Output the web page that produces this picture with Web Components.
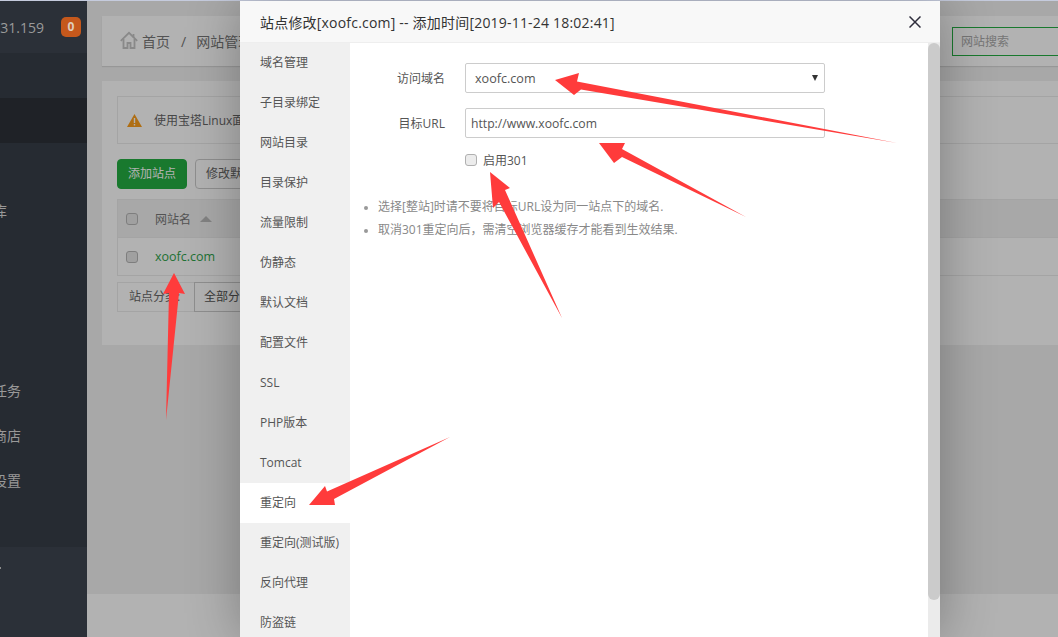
<!DOCTYPE html>
<html lang="zh">
<head>
<meta charset="utf-8">
<title>站点修改</title>
<style>
    html, body { margin: 0; height: 100%; overflow: hidden; }
    body { font: 12px "Open Sans", "Noto Sans CJK SC", sans-serif; color: #555; background: #c5cbdd; }
    bt-app { height: 637px; }
</style>
</head>
<body>
<bt-app>
    <bt-sidebar slot="side" ip="47.106.231.159" count="0">
        <bt-nav-item active></bt-nav-item>
        <bt-nav-item></bt-nav-item>
        <bt-nav-item>数据库</bt-nav-item>
        <bt-nav-item></bt-nav-item>
        <bt-nav-item></bt-nav-item>
        <bt-nav-item></bt-nav-item>
        <bt-nav-item>计划任务</bt-nav-item>
        <bt-nav-item>软件商店</bt-nav-item>
        <bt-nav-item>面板设置</bt-nav-item>
    </bt-sidebar>
    <bt-main>
        <bt-breadcrumb></bt-breadcrumb>
        <bt-site-card></bt-site-card>
    </bt-main>
    <bt-site-modal slot="over" heading="站点修改[xoofc.com] -- 添加时间[2019-11-24 18:02:41]">
        <bt-redirect-form></bt-redirect-form>
    </bt-site-modal>
    <bt-arrows slot="over"></bt-arrows>
</bt-app>

<script>
class BtApp extends HTMLElement {
    constructor() {
        super();
        this.attachShadow({ mode: "open" }).innerHTML = `
        <style>
            :host { display: block; position: relative; overflow: hidden; }
            .page { display: flex; height: 636px; margin-top: 1px; background: #f1f1f1; }
            .main { flex: 1; min-width: 0; }
        </style>
        <div class="page">
            <slot name="side"></slot>
            <div class="main"><slot></slot></div>
        </div>
        <slot name="over"></slot>`;
    }
}
customElements.define("bt-app", BtApp);

// sits above the backdrop, so its colours are the dimmed ones already
class BtSidebar extends HTMLElement {
    constructor() {
        super();
        this.attachShadow({ mode: "open" }).innerHTML = `
        <style>
            :host { display: flex; flex-direction: column; position: relative; z-index: 1; width: 87px; flex: none; background: #262b32; overflow: hidden; }
            .top { height: 52px; background: #2b3038; display: flex; align-items: center; justify-content: flex-end; gap: 17px; padding-right: 6px; white-space: nowrap; flex: none; }
            .ip { font-size: 14px; color: #9a9a9a; }
            .badge { width: 20px; height: 20px; border-radius: 5px; background: #c5581c; color: #dfcdbd; font-weight: 700; font-size: 12px; line-height: 20px; text-align: center; flex: none; }
            nav { padding-top: 45px; }
            .foot { margin-top: auto; height: 90px; background: #2b3038; flex: none; padding-top: 20px; box-sizing: border-box; }
            .foot i { display: block; width: 1px; height: 2px; background: #8c8c8c; }
        </style>
        <div class="top"><span class="ip"></span><span class="badge"></span></div>
        <nav><slot></slot></nav>
        <div class="foot"><i></i></div>`;
    }
    connectedCallback() {
        this.shadowRoot.querySelector(".ip").textContent = this.getAttribute("ip");
        this.shadowRoot.querySelector(".badge").textContent = this.getAttribute("count");
    }
}
customElements.define("bt-sidebar", BtSidebar);

class BtNavItem extends HTMLElement {
    constructor() {
        super();
        this.attachShadow({ mode: "open" }).innerHTML = `
        <style>
            :host { display: block; height: 45px; line-height: 45px; font-size: 14px; color: #999; white-space: nowrap; margin-left: -35px; }
            :host([active]) { background: #1f2227; }
        </style>
        <slot></slot>`;
    }
}
customElements.define("bt-nav-item", BtNavItem);

class BtMain extends HTMLElement {
    constructor() {
        super();
        this.attachShadow({ mode: "open" }).innerHTML = `
        <style>
            :host { display: flex; flex-direction: column; height: 636px; overflow: hidden; }
            .body { padding: 15px 0 0 15px; width: 1100px; }
            .foot { margin-top: auto; height: 43px; background: #fff; flex: none; }
        </style>
        <div class="body"><slot></slot></div>
        <div class="foot"></div>`;
    }
}
customElements.define("bt-main", BtMain);

class BtBreadcrumb extends HTMLElement {
    constructor() {
        super();
        this.attachShadow({ mode: "open" }).innerHTML = `
        <style>
            :host { display: flex; align-items: center; height: 50px; background: #fff; box-shadow: 0 1px 1px rgba(0,0,0,.1); margin-bottom: 15px; padding: 0 130px 0 18px; font-size: 14px; color: #777; white-space: nowrap; }
            svg { width: 18px; height: 18px; margin: -3px 4px 0 0; flex: none; }
            .sep { margin: 0 10px 0 11px; }
            .search { margin-left: auto; width: 120px; height: 29px; box-sizing: border-box; border: 1px solid #25ae42; padding-left: 8px; font-size: 12px; line-height: 27px; color: #aaa; flex: none; }
        </style>
        <svg viewBox="0 0 18 18" fill="none" stroke="#c4c4c4" stroke-width="1.800">
            <path d="M.8 9.800 9 1.800l8.200 8"/>
            <path d="M3.500 8v9h4v-5h3v5h4V8"/>
            <path d="M13.500 3v3.500"/>
        </svg>
        <span>首页</span><span class="sep">/</span><span>网站管理</span>
        <span class="search">网站搜索</span>`;
    }
}
customElements.define("bt-breadcrumb", BtBreadcrumb);

class BtSiteCard extends HTMLElement {
    constructor() {
        super();
        this.attachShadow({ mode: "open" }).innerHTML = `
        <style>
            :host { display: block; background: #fff; height: 264px; padding: 15px; box-sizing: border-box; white-space: nowrap; }
            .alert { display: flex; align-items: center; height: 48px; box-sizing: border-box; border: 1px solid #ebebeb; padding-left: 9px; color: #666; }
            .alert svg { width: 15px; height: 13px; margin-right: 12px; }
            .tools { display: flex; gap: 8px; margin: 15px 0 10px; }
            .btn { height: 30px; line-height: 28px; box-sizing: border-box; border: 1px solid #ccc; border-radius: 4px; padding: 0 10px; color: #666; background: #fff; }
            .btn.green { background: #25ae42; border-color: #25ae42; color: #fff; }
            .row { display: flex; align-items: center; height: 38px; box-sizing: border-box; border: 1px solid #ebebeb; border-top: 0; padding-left: 8px; }
            .row.head { height: 39px; border-top: 1px solid #ebebeb; background: #f1f1f1; color: #777; }
            .box { width: 12px; height: 12px; border: 1px solid #b5b5b5; border-radius: 3px; background: #e6e6e6; box-sizing: border-box; margin-right: 17px; }
            .caret { width: 0; height: 0; border: 6px solid transparent; border-top: 0; border-bottom: 6px solid #bbb; margin-left: 9px; }
            .link { font-size: 12.500px; color: #30a34c; }
            .group { display: flex; margin-top: 6px; height: 30px; }
            .group span { box-sizing: border-box; border: 1px solid #ebebeb; line-height: 28px; }
            .group .label { width: 77px; padding-left: 11px; border-right: 0; color: #666; }
            .group .select { width: 120px; padding-left: 9px; border-color: #ccc; color: #555; }
        </style>
        <div class="alert">
            <svg viewBox="0 0 15 13"><path d="M7.500 0 15 13H0z" fill="#fb9e1c"/><path d="M6.800 4h1.400v5H6.800zM6.800 10h1.400v1.500H6.800z" fill="#fff"/></svg>
            使用宝塔Linux面板
        </div>
        <div class="tools"><span class="btn green">添加站点</span><span class="btn">修改默认页</span></div>
        <div class="row head"><span class="box"></span>网站名<span class="caret"></span></div>
        <div class="row"><span class="box"></span><span class="link">xoofc.com</span></div>
        <div class="group"><span class="label">站点分类:</span><span class="select">全部分类</span></div>`;
    }
}
customElements.define("bt-site-card", BtSiteCard);

class BtSiteModal extends HTMLElement {
    constructor() {
        super();
        const tabs = ["域名管理", "子目录绑定", "网站目录", "目录保护", "流量限制", "伪静态", "默认文档", "配置文件", "SSL", "PHP版本", "Tomcat", "重定向", "重定向(测试版)", "反向代理", "防盗链"];
        this.attachShadow({ mode: "open" }).innerHTML = `
        <style>
            :host { display: block; position: absolute; left: 0; right: 0; top: 1px; bottom: 0; background: rgba(0,0,0,.3); }
            .layer { display: flex; flex-direction: column; width: 700px; height: 100%; margin-left: 240px; background: #fff; box-shadow: 1px 1px 50px rgba(0,0,0,.3); }
            header { display: flex; align-items: center; justify-content: space-between; height: 42px; box-sizing: border-box; flex: none; background: #f8f8f8; border-bottom: 1px solid #eee; padding: 0 19px 0 20px; font-size: 14px; letter-spacing: .2px; color: #333; }
            header svg { width: 12px; height: 12px; }
            .body { display: flex; flex: 1; min-height: 0; }
            ul { list-style: none; margin: 0; padding: 0; width: 110px; flex: none; background: #f0f0f0; overflow: hidden; }
            li { height: 40px; line-height: 40px; padding-left: 20px; color: #555; }
            li.on { background: #fff; }
            .content { flex: 1; min-width: 0; }
            .bar { width: 12px; flex: none; background: #ebebeb; }
            .thumb { height: 557px; background: #cbcbcb; border-radius: 6px; }
        </style>
        <div class="layer">
            <header><span class="title"></span>
                <svg viewBox="0 0 12 12" stroke="#2e2d3c" stroke-width="1.500" fill="none"><path d="M.5.5l11 11M11.500.5l-11 11"/></svg>
            </header>
            <div class="body">
                <ul>${tabs.map(t => `<li class="${t === "重定向" ? "on" : ""}">${t}</li>`).join("")}</ul>
                <div class="content"><slot></slot></div>
                <div class="bar"><div class="thumb"></div></div>
            </div>
        </div>`;
    }
    connectedCallback() {
        this.shadowRoot.querySelector(".title").textContent = this.getAttribute("heading");
    }
}
customElements.define("bt-site-modal", BtSiteModal);

class BtRedirectForm extends HTMLElement {
    constructor() {
        super();
        this.attachShadow({ mode: "open" }).innerHTML = `
        <style>
            :host { display: block; padding-top: 20px; }
            .line { display: flex; align-items: center; height: 30px; margin-bottom: 15px; }
            label { width: 95px; text-align: right; margin-right: 20px; color: #555; flex: none; }
            .ctrl { display: flex; align-items: center; justify-content: space-between; width: 360px; height: 30px; box-sizing: border-box; border: 1px solid #ccc; border-radius: 2px; color: #555; }
            .sel { padding: 0 6px 0 9px; font-size: 12.600px; }
            .sel i { width: 0; height: 0; border: 3.500px solid transparent; border-bottom: 0; border-top: 6px solid #333; }
            .inp { padding-left: 5px; font-size: 12.200px; }
            .check { display: flex; align-items: center; margin: -3px 0 0 115px; height: 20px; color: #555; }
            .check i { width: 12px; height: 12px; box-sizing: border-box; border: 1px solid #b0b0b0; border-radius: 3px; background: #ececec; margin-right: 6px; }
            ul { margin: 25px 0 0; padding: 0 0 0 28px; color: #888; line-height: 23px; }
            li::marker { color: #999; font-size: 10px; }
        </style>
        <div class="line"><label>访问域名</label><div class="ctrl sel"><span>xoofc.com</span><i></i></div></div>
        <div class="line"><label>目标URL</label><div class="ctrl inp"><span>http://www.xoofc.com</span></div></div>
        <div class="check"><i></i>启用301</div>
        <ul>
            <li>选择[整站]时请不要将目标URL设为同一站点下的域名.</li>
            <li>取消301重定向后，需清空浏览器缓存才能看到生效结果.</li>
        </ul>`;
    }
}
customElements.define("bt-redirect-form", BtRedirectForm);

class BtArrows extends HTMLElement {
    constructor() {
        super();
        this.attachShadow({ mode: "open" }).innerHTML = `
        <style>
            :host { display: block; position: absolute; left: 0; top: 0; width: 1058px; height: 637px; pointer-events: none; }
            svg { display: block; }
            polygon { fill: #ff3b3b; }
        </style>
        <svg width="1058" height="637" viewBox="0 0 1058 637">
            <polygon points="555,80 579,73 577,81.500 897,143 581,89.500 574,95"/>
            <polygon points="599,143 625,143 622,149 746,217 622,157 614,163"/>
            <polygon points="490,172 510,188 505,190 562,318 499,202 493,208"/>
            <polygon points="174,273 185,294 179,293 166,420 169,293 163,294"/>
            <polygon points="309,505 325,486 327,491.500 450,437 334,499 335,505"/>
        </svg>`;
    }
}
customElements.define("bt-arrows", BtArrows);
</script>
</body>
</html>
